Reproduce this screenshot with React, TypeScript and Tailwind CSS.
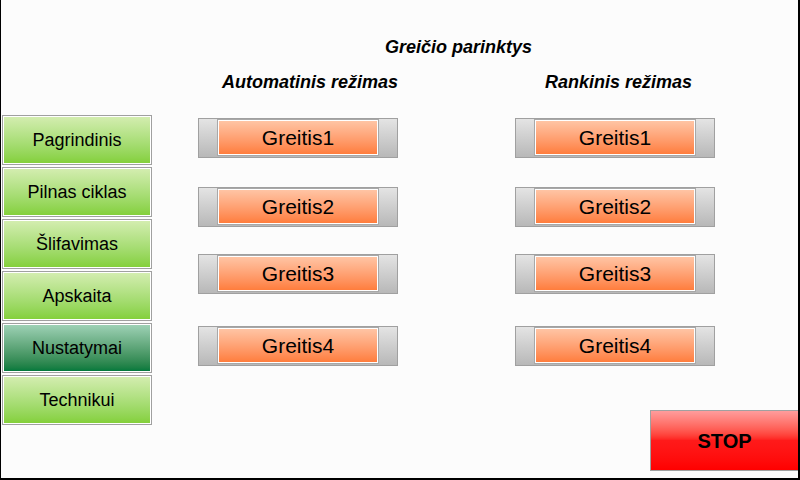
const NAV = [
  { label: 'Pagrindinis', active: false },
  { label: 'Pilnas ciklas', active: false },
  { label: 'Šlifavimas', active: false },
  { label: 'Apskaita', active: false },
  { label: 'Nustatymai', active: true },
  { label: 'Technikui', active: false },
];

// top margins of each speed row, taken from the panel layout
const ROWS = [
  { label: 'Greitis1', mt: 'mt-0' },
  { label: 'Greitis2', mt: 'mt-[29px]' },
  { label: 'Greitis3', mt: 'mt-[27px]' },
  { label: 'Greitis4', mt: 'mt-[32px]' },
];

function NavButton({ label, active }: { label: string; active: boolean }) {
  return (
    <div className="h-[50px] w-[150px] border border-[#a0a0a0]">
      <div
        className={
          active
            ? 'flex h-full items-center justify-center border border-white bg-gradient-to-b from-[#9dd1b5] to-[#00793c] pt-px text-[18px] text-black'
            : 'flex h-full items-center justify-center border border-white bg-gradient-to-b from-[#d3edaf] to-[#84d03a] pt-px text-[18px] text-black'
        }
      >
        {label}
      </div>
    </div>
  );
}

function SpeedButton({ label, mt }: { label: string; mt: string }) {
  return (
    <div className={`${mt} flex h-[40px] w-[200px] justify-center border border-[#a0a0a0] bg-gradient-to-b from-[#e4e4e4] to-[#b8b8b8] pt-px`}>
      <div className="flex h-[35px] w-[160px] items-center justify-center border border-white bg-gradient-to-b from-[#ffc4a4] to-[#ff7d3c] text-[21px] text-black shadow-[0_0_0_1px_#a8a8a8]">
        {label}
      </div>
    </div>
  );
}

function SpeedColumn({ title, pad }: { title: string; pad: string }) {
  return (
    <div className="flex w-[200px] flex-col">
      <div className={`${pad} whitespace-nowrap text-[18px] leading-[20px] font-bold italic`}>{title}</div>
      <div className="mt-[26px] flex flex-col">
        {ROWS.map(r => (
          <SpeedButton key={r.label} label={r.label} mt={r.mt} />
        ))}
      </div>
    </div>
  );
}

export default function App() {
  return (
    <div className="flex h-[480px] w-[800px] border-b-2 border-l border-r-2 border-black bg-[#fcfcfc] font-['Liberation_Sans',Arial,sans-serif] text-black">
      <div className="ml-px flex flex-col gap-[2px] pt-[115px]">
        {NAV.map(n => (
          <NavButton key={n.label} label={n.label} active={n.active} />
        ))}
      </div>

      <div className="flex flex-1 flex-col pt-[37px]">
        <div className="ml-[46px] w-[517px]">
          <div className="pl-1 text-center text-[18px] leading-[20px] font-bold italic">Greičio parinktys</div>
          <div className="mt-[15px] flex justify-between">
            <SpeedColumn title="Automatinis režimas" pad="pl-[24px]" />
            <SpeedColumn title="Rankinis režimas" pad="pl-[30px]" />
          </div>
        </div>

        <div className="mb-[7px] mt-auto flex h-[61px] w-[148px] items-center justify-center self-end border border-r-0 border-[#a0a0a0] bg-gradient-to-b from-[#ff9c9c] via-[#ff1a1a] to-[#ff0000] text-[20px] font-bold">
          STOP
        </div>
      </div>
    </div>
  );
}
